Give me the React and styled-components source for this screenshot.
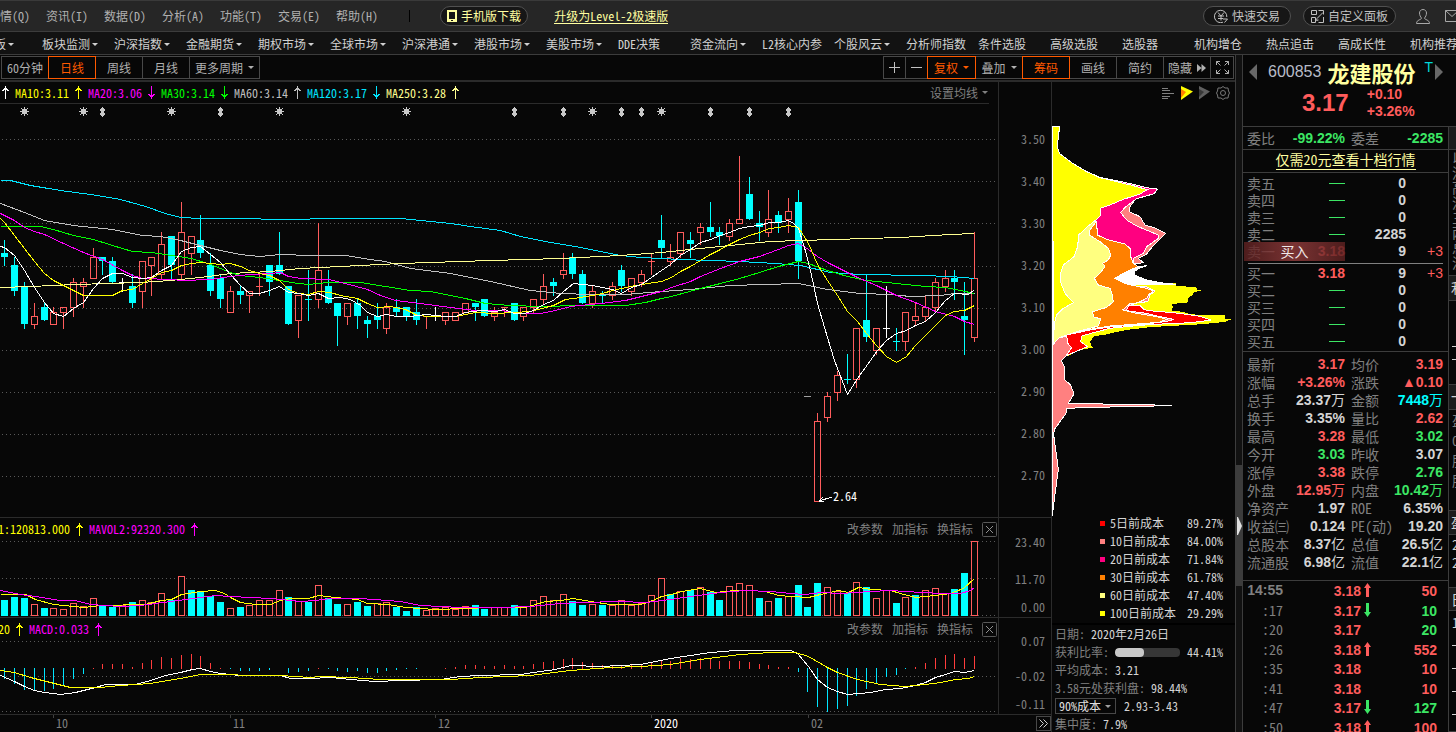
import React, { Component } from 'react';
import styled, { createGlobalStyle, ThemeProvider } from 'styled-components';

const theme = {
  colors: {
    bg: '#070707',
    line: '#2b2b2b',
    border: '#484848',
    panelLine: '#3c3c3c',
    text: '#c8c8c8',
    muted: '#808080',
    accent: '#ff5a00',
    up: '#ff5c5c',
    down: '#3ce664',
    cyan: '#00ffff',
    white: '#d4d4d4',
    paleYellow: '#ffffa0',
  },
};

const GlobalStyle = createGlobalStyle`
  * { box-sizing: border-box; }
  body {
    margin: 0;
    background: #070707;
    color: #c8c8c8;
    font-family: "Noto Sans CJK SC", sans-serif;
    font-feature-settings: "hwid";
    font-size: 12px;
    line-height: 18px;
    overflow: hidden;
  }
  button, select {
    font: inherit;
    font-feature-settings: inherit;
    color: inherit;
    background: none;
    border: 0;
    padding: 0;
    margin: 0;
    white-space: nowrap;
  }
  a { color: inherit; text-decoration: none; }
  svg { display: block; flex: none; }
  ul, dl, dd { margin: 0; padding: 0; list-style: none; }
`;

/* ---------- top bar ---------- */

const TopBar = styled.header`
  display: flex;
  align-items: center;
  height: 32px;
  background: #262626;
  border-top: 1px solid #3a3a3a;
  border-bottom: 1px solid #3c3c3c;
  overflow: hidden;
  white-space: nowrap;
`;

const Menu = styled.nav`
  display: flex;
  gap: 16px;
  margin-left: -12px;
  color: #b0b0b0;
`;

const Divider = styled.span`
  width: 1px;
  height: 12px;
  margin: 0 30px 0 31px;
  background: #000;
`;

const Pill = styled.button`
  display: flex;
  align-items: center;
  gap: 4px;
  height: 20px;
  padding: 0 ${({ pad }) => pad}px;
  border: 1px solid #505050;
  border-radius: 10px;
  background: #161616;
  color: ${({ tone }) => tone || '#c0c0c0'};
`;

const UpgradeLink = styled.a`
  margin-left: 26px;
  color: ${({ theme }) => theme.colors.paleYellow};
  border-bottom: 1px solid;
  line-height: 14px;
`;

const TopRight = styled.div`
  display: flex;
  align-items: center;
  gap: 12px;
  margin: 0 -3px 0 auto;
`;

const TopIcons = styled.div`
  display: flex;
  align-items: center;
  gap: 15px;
  padding-left: 8px;
`;

/* ---------- shortcuts ---------- */

const Shortcuts = styled.nav`
  display: flex;
  height: 23px;
  padding-top: 2px;
  margin-left: -30px;
  background: #121212;
  border-bottom: 1px solid ${({ theme }) => theme.colors.panelLine};
  color: #d0d0d0;
  overflow: hidden;
`;

const Shortcut = styled.a`
  display: flex;
  flex: 0 0 72px;
  align-items: center;
  gap: 2px;
  white-space: nowrap;
`;

const Caret = styled.span`
  border: 3px solid transparent;
  border-top-color: currentColor;
  border-bottom: 0;
`;

/* ---------- page frame ---------- */

const Body = styled.div`
  display: grid;
  grid-template-columns: minmax(0, 1fr) 6px 214px;
`;

const Main = styled.main`
  min-width: 0;
  border-right: 1px solid ${({ theme }) => theme.colors.panelLine};
`;

const Toolbar = styled.div`
  display: flex;
  justify-content: space-between;
  height: 27px;
  padding: 1px 1px 0;
  border-bottom: 2px solid ${({ theme }) => theme.colors.line};
`;

const Tabs = styled.div`
  display: flex;
`;

const Tab = styled.button`
  position: relative;
  display: flex;
  align-items: center;
  justify-content: center;
  gap: 5px;
  width: ${({ width }) => width || 48}px;
  height: 23px;
  border: 1px solid ${({ theme, active }) => (active ? theme.colors.accent : theme.colors.border)};
  color: ${({ theme, active }) => (active ? theme.colors.accent : '#b0b0b0')};
  z-index: ${({ active }) => (active ? 1 : 0)};
  & + & { margin-left: -1px; }
`;

const Workspace = styled.div`
  display: grid;
  grid-template-columns: minmax(0, 1fr) 184px;
`;

const Section = styled.section`
  display: grid;
  grid-template-columns: minmax(0, 1fr) 53px;
  border-bottom: 1px solid ${({ theme }) => theme.colors.line};
`;

const Plot = styled.div`
  flex: 1;
  min-width: 0;
  overflow: hidden;
`;

const PlotSvg = styled.svg`
  width: 100%;
  height: ${({ size }) => size}px;
`;

const PlotHeader = styled.div`
  display: flex;
  align-items: center;
  justify-content: space-between;
  height: 22px;
  padding-right: 1px;
  white-space: nowrap;
`;

const MaHeader = styled(PlotHeader)`
  margin-right: 9px;
  border-bottom: 1px solid ${({ theme }) => theme.colors.line};
`;

const Readings = styled.div`
  display: flex;
  gap: 6px;
`;

const Reading = styled.span`
  display: flex;
  align-items: center;
  justify-content: flex-end;
  gap: 6px;
  color: ${({ color }) => color};
  width: ${({ clip }) => (clip ? `${clip}px` : 'auto')};
`;

const HeaderTools = styled.div`
  display: flex;
  align-items: center;
  gap: 9px;
  color: ${({ theme }) => theme.colors.muted};
`;

const AverageButton = styled.button`
  display: flex;
  align-items: center;
  gap: 4px;
  color: ${({ theme }) => theme.colors.muted};
`;

const PriceAxis = styled.div`
  border-left: 1px solid ${({ theme }) => theme.colors.line};
  color: ${({ theme }) => theme.colors.muted};
  padding: 36px 6px 0 0;
  line-height: 42px;
  text-align: right;
`;

const SmallAxis = styled.div`
  display: grid;
  grid-template-rows: ${({ step }) => `${step}px ${step}px`} 1fr;
  align-items: center;
  border-left: 1px solid ${({ theme }) => theme.colors.line};
  color: ${({ theme }) => theme.colors.muted};
  padding: 5px 6px 0 0;
  text-align: right;
`;

const DateRow = styled.div`
  display: flex;
  height: 17px;
`;

const MoreButton = styled.button`
  display: grid;
  place-items: center;
  flex: none;
  width: 15px;
  height: 15px;
  margin-top: 1px;
  border: 1px solid ${({ theme }) => theme.colors.border};
`;

/* ---------- chip distribution ---------- */

const Chips = styled.aside`
  border-left: 1px solid ${({ theme }) => theme.colors.line};
  overflow: hidden;
`;

const ChipTools = styled.div`
  display: flex;
  align-items: center;
  justify-content: flex-end;
  gap: 6px;
  height: 22px;
  padding-right: 5px;
`;

const ChipSvg = styled.svg`
  width: 182px;
  height: 410px;
  overflow: visible;
`;

const CostList = styled.ul`
  padding: 0 12px 1px 48px;
  border-bottom: 2px solid #000;
`;

const CostItem = styled.li`
  display: flex;
  align-items: center;
  gap: 5px;
  color: ${({ theme }) => theme.colors.white};
`;

const Swatch = styled.span`
  width: 5px;
  height: 5px;
  background: ${({ color }) => color};
`;

const CostValue = styled.span`
  margin-left: auto;
`;

const Info = styled.dl`
  padding: 0 12px 0 3px;
`;

const InfoRow = styled.div`
  display: flex;
  align-items: center;
  height: 18px;
  white-space: nowrap;
  dt { color: ${({ theme }) => theme.colors.muted}; }
  dd {
    margin-left: 6px;
    color: ${({ theme }) => theme.colors.white};
  }
`;

const RatioValue = styled.dd`
  display: flex;
  align-items: center;
  gap: 7px;
`;

const Track = styled.span`
  width: 65px;
  height: 9px;
  border-radius: 4px;
  background: #363636;
  overflow: hidden;
`;

const Fill = styled.span`
  display: block;
  height: 100%;
  border-radius: 4px;
  background: #c8c8c8;
`;

const SelectBox = styled.label`
  display: flex;
  align-items: center;
  width: 61px;
  height: 16px;
  padding: 0 4px 0 3px;
  margin-right: 2px;
  border: 1px solid ${({ theme }) => theme.colors.border};
  color: #a0a0a0;
  select {
    appearance: none;
    width: 48px;
    line-height: 14px;
    color: #e0e0e0;
  }
`;

const ScrollTrack = styled.div`
  display: flex;
  flex-direction: column;
  padding-top: 410px;
  background: #111;
`;

const ScrollThumb = styled.div`
  display: flex;
  align-items: center;
  justify-content: flex-end;
  height: 121px;
  background: #3c3c3c;
`;

/* ---------- quote panel ---------- */

const Quote = styled.aside`
  border-left: 1px solid ${({ theme }) => theme.colors.panelLine};
  font-size: 14px;
  min-width: 0;
  overflow: hidden;
`;

const QuoteHead = styled.div`
  height: 72px;
  padding-top: 4px;
  border-bottom: 1px solid ${({ theme }) => theme.colors.panelLine};
`;

const StockTitle = styled.div`
  display: flex;
  align-items: center;
  height: 26px;
  padding-left: 6px;
  white-space: nowrap;
`;

const StockCode = styled.span`
  margin: 0 6px 0 11px;
  font: 16px "Liberation Sans", sans-serif;
  color: #b8bcc8;
`;

const StockName = styled.h1`
  margin: 0;
  font-size: 22px;
  font-weight: 700;
  line-height: 26px;
  color: ${({ theme }) => theme.colors.paleYellow};
`;

const Tag = styled.span`
  align-self: flex-start;
  margin: 0 2px 0 9px;
  font: 14px/16px "Liberation Sans", sans-serif;
  color: #00d8d8;
`;

const PriceLine = styled.div`
  display: flex;
  align-items: center;
  gap: 18px;
  padding-left: 59px;
  height: 36px;
  color: ${({ theme }) => theme.colors.up};
  font-family: "Liberation Sans", sans-serif;
  font-weight: 700;
`;

const LastPrice = styled.span`
  font-size: 24px;
`;

const Changes = styled.div`
  line-height: 17px;
`;

const QuoteBody = styled.div`
  display: grid;
  grid-template-columns: minmax(0, 1fr) 8px;
`;

const Num = styled.span`
  font-family: "Liberation Sans", "Noto Sans CJK SC", sans-serif;
  font-weight: 700;
  text-align: right;
  white-space: nowrap;
  color: ${({ theme, tone }) => theme.colors[tone || 'white']};
`;

const Unit = styled.span`
  font-weight: 400;
`;

const Label = styled.span`
  color: ${({ theme }) => theme.colors.muted};
  white-space: nowrap;
`;

const PairRow = styled.div`
  display: grid;
  grid-template-columns: 28px 70px 28px 70px;
  align-items: center;
  height: 18px;
  padding-left: 4px;
  ${Label}:nth-child(3) { margin-left: 6px; }
`;

const RatioRow = styled(PairRow)`
  height: 23px;
  border-bottom: 1px solid ${({ theme }) => theme.colors.panelLine};
`;

const PromoRow = styled.div`
  height: 23px;
  text-align: center;
  border-bottom: 1px solid ${({ theme }) => theme.colors.panelLine};
  a {
    color: ${({ theme }) => theme.colors.paleYellow};
    border-bottom: 1px solid;
  }
`;

const Depth = styled.div`
  padding: ${({ side }) => (side === 'sell' ? '1px 5px 4px 4px' : '0 5px 2px 4px')};
`;

const DepthRow = styled.div`
  position: relative;
  display: grid;
  grid-template-columns: 40px 58px 61px 37px;
  align-items: center;
  height: 17px;
`;

const Dash = styled.span`
  justify-self: end;
  width: 16px;
  height: 1px;
  background: ${({ theme }) => theme.colors.down};
`;

const Delta = styled(Num)`
  font-weight: 400;
`;

const BuyButton = styled.button`
  position: absolute;
  left: -3px;
  top: 0;
  width: 101px;
  height: 19px;
  line-height: 19px;
  color: #f0e8e8;
  background: linear-gradient(90deg, rgba(90, 32, 32, 0.85), rgba(150, 62, 62, 0.8) 50%, rgba(90, 32, 32, 0.85));
`;

const DepthSplit = styled.div`
  height: 1px;
  margin: 0 5px;
  background: #808080;
`;

const Stats = styled.div`
  height: 230px;
  padding-top: 3px;
  border-top: 1px solid ${({ theme }) => theme.colors.panelLine};
  border-bottom: 1px solid ${({ theme }) => theme.colors.panelLine};
`;

const Ticks = styled.table`
  width: 100%;
  border-collapse: collapse;
  line-height: 18px;
  td {
    padding: 0;
    vertical-align: top;
  }
  tr { height: 20px; }
  tr:nth-child(even) { height: 19px; }
`;

const TimeCell = styled.td`
  width: 40px;
  text-align: right;
  color: ${({ theme }) => theme.colors.muted};
  font-weight: ${({ strong }) => (strong ? 700 : 400)};
  font-family: ${({ strong }) => (strong ? '"Liberation Sans", sans-serif' : 'inherit')};
`;

const TickPrice = styled.td`
  width: 78px;
  text-align: right;
`;

const TickArrow = styled.td`
  padding: 2px 0 0 3px !important;
`;

const TickVolume = styled.td`
  padding-right: 11px !important;
  text-align: right;
`;

const Strip = styled.div`
  border-left: 1px solid ${({ theme }) => theme.colors.panelLine};
  color: ${({ theme }) => theme.colors.muted};
  overflow: hidden;
`;

const StripHead = styled.div`
  height: ${({ size }) => size || 25}px;
  padding-left: 2px;
  background: #1c1c1c;
  border-bottom: 1px solid ${({ theme }) => theme.colors.panelLine};
  line-height: 22px;
  white-space: nowrap;
  color: ${({ theme }) => theme.colors.white};
`;

const StripBody = styled.div`
  height: ${({ size }) => size}px;
  padding-left: 3px;
  border-bottom: 1px solid ${({ theme }) => theme.colors.panelLine};
  line-height: ${({ line }) => line}px;
  color: ${({ theme, bright }) => (bright ? theme.colors.white : 'inherit')};
`;

const StripRow = styled.div`
  display: flex;
  align-items: center;
  height: ${({ size }) => size}px;
  white-space: nowrap;
`;

const StripDash = styled.span`
  width: 14px;
  height: 1px;
  background: currentColor;
`;

/* ---------- data ---------- */

const MENU = ['行情(Q)', '资讯(I)', '数据(D)', '分析(A)', '功能(T)', '交易(E)', '帮助(H)'];

const SHORTCUTS = [
  ['创业板', true], ['板块监测', true], ['沪深指数', true], ['金融期货', true],
  ['期权市场', true], ['全球市场', true], ['沪深港通', true], ['港股市场', true],
  ['美股市场', true], ['DDE决策'], ['资金流向', true], ['L2核心内参'],
  ['个股风云', true], ['分析师指数'], ['条件选股'], ['高级选股'], ['选股器'],
  ['机构增仓'], ['热点追击'], ['高成长性'], ['机构推荐'],
];

// direction, high, body top, body bottom, low (cents)
const CANDLES = [
  'C 326 323 322 320', 'C 322 320 314 313', 'C 316 315 306 305', 'R 311 308 306 305', 'C 311 310 307 307',
  'R 310 309 306 306', 'R 310 310 309 305', 'R 317 316 310 308', 'R 317 316 315 310', 'R 324 322 317 317',
  'C 322 322 321 318', 'C 322 321 316 316', 'W 317 316 316 314', 'C 318 315 311 310', 'R 321 321 314 310',
  'R 322 322 320 313', 'R 328 325 318 317', 'C 327 327 320 317', 'R 335 328 318 317', 'R 327 327 323 318',
  'C 332 326 323 322', 'C 323 320 314 313', 'C 318 317 312 310', 'R 315 314 309 309', 'C 315 314 313 311',
  'R 314 314 313 309', 'R 318 315 315 313', 'C 320 320 316 313', 'C 328 320 318 318', 'C 315 315 306 306',
  'R 313 313 307 303', 'C 319 312 312 307', 'R 330 319 312 310', 'C 319 315 311 311', 'C 311 311 308 301',
  'R 311 311 308 306', 'C 312 311 308 305', 'C 308 307 306 303', 'C 311 308 307 305', 'R 311 310 305 304',
  'C 312 310 309 308', 'C 310 310 308 307', 'C 312 309 307 306', 'R 308 308 308 305', 'W 310 308 308 307',
  'R 309 309 307 306', 'R 309 309 307 307', 'R 311 311 309 309', 'C 311 311 310 307', 'C 312 312 308 308',
  'R 310 309 308 307', 'R 310 310 310 308', 'C 311 311 307 307', 'R 310 310 308 307', 'R 312 312 310 309',
  'R 318 315 312 311', 'C 317 316 315 313', 'R 323 319 318 317', 'C 323 322 318 317', 'C 319 318 311 311',
  'R 315 314 311 310', 'C 314 313 313 311', 'R 316 315 313 312', 'C 320 319 315 314', 'R 317 317 314 313',
  'R 319 318 316 315', 'R 323 321 321 318', 'C 332 326 324 322', 'R 325 322 321 320', 'R 328 328 323 322',
  'C 328 326 325 322', 'R 330 329 328 325', 'C 335 329 328 327', 'C 329 328 327 325', 'R 331 330 327 326',
  'R 346 331 330 330', 'C 341 337 331 331', 'C 333 330 329 326', 'R 338 331 328 327', 'C 333 332 330 328',
  'R 336 333 331 328', 'C 338 335 321 317', 'G 289 289 289 289', 'R 285 283 264 264', 'R 290 289 284 283',
  'R 295 294 290 288', 'C 299 293 293 292', 'R 305 305 293 291', 'C 318 307 303 302', 'R 305 305 300 299',
  'W 315 305 305 303', 'C 305 302 302 300', 'R 309 309 302 300', 'R 311 308 307 306', 'R 313 310 308 307',
  'R 317 316 310 309', 'R 319 317 315 314', 'C 319 317 316 312', 'C 316 308 307 299', 'R 328 317 303 302',
].map((row) => row.split(' '));

const VOLUMES = [
  16, 19, 18, 11, 8, 7, 6, 12, 9, 17, 10, 9, 10, 14, 15, 13, 22, 16, 39, 26,
  25, 20, 14, 7, 9, 10, 15, 15, 25, 19, 14, 14, 30, 18, 12, 11, 14, 10, 12, 13,
  9, 5, 9, 5, 7, 8, 6, 9, 11, 7, 8, 8, 11, 8, 15, 19, 15, 21, 15, 11,
  11, 11, 10, 15, 10, 12, 20, 37, 22, 24, 26, 28, 24, 16, 29, 32, 30, 18, 14, 18,
  19, 31, 9, 33, 28, 24, 23, 33, 29, 17, 25, 13, 18, 21, 25, 27, 22, 27, 43, 74,
];

const FALLING = new Set([
  0, 1, 2, 4, 10, 11, 13, 17, 19, 20, 21, 22, 24, 29, 31, 33, 34, 36, 37, 40, 41, 42, 48, 49,
  52, 58, 59, 61, 68, 70, 72, 73, 77, 79, 81, 82, 83, 86, 88, 91, 93, 97, 98,
]);

const MACD = [
  -11, -16, -22, -23, -23, -21, -18, -11, -6, 1, 5, 5, 5, 2, 6, 9, 12, 11, 14, 15,
  13, 6, 1, -1, -3, -3, -3, -2, 0, -5, -4, -3, 1, -1, -3, -4, -3, -5, -5, -3,
  -2, -1, -1, 0, 0, 1, 2, 4, 4, 3, 3, 4, 3, 3, 5, 7, 8, 10, 11, 7,
  6, 4, 4, 4, 4, 4, 6, 8, 8, 11, 10, 11, 10, 8, 8, 8, 7, 5, 4, 2,
  2, -4, -24, -39, -44, -41, -38, -28, -21, -15, -9, -7, -1, 2, 6, 11, 14, 15, 11, 13,
];

const MA_LINES = [
  ['#c0c0c0', '0,203 24,212 44,220 73,225 112,229 142,235 160,236 180,240 200,245 220,250 240,254 259,256 280,254 310,255 345,255 370,259 385,261 410,268 450,273 490,281 530,290 560,293 590,294 625,294 661,291 690,289 730,285 798,283 808,285 827,289 860,293 890,294 910,296 940,295 954,293 974,293'],
  ['#00e5ff', '0,180 10,180 30,185 60,190 90,194 120,199 145,206 165,213 180,217 200,218 240,218 280,219 340,218 400,218 430,221 450,223 470,226 500,230 520,236 550,242 580,247 605,252 620,255 640,257 680,259 740,261 775,263 800,265 830,272 860,274 920,275 950,276 974,278'],
  ['#ffff90', '0,287 30,286 75,284 140,282 170,280 200,277 230,273 270,271 300,268 340,266 400,263 490,260 560,258 620,255 661,252 680,250 720,246 770,241 800,240 900,237 950,234 974,233'],
  ['#00ff00', '0,226 40,226 53,229 73,235 93,239 112,245 132,251 151,252 171,255 191,258 210,264 230,272 240,275 259,277 279,280 298,283 308,284 328,282 360,282 385,286 410,290 430,291 445,294 465,298 485,303 510,305 540,306 580,305 625,305 645,302 661,298 671,296 700,288 720,283 739,278 759,272 778,266 798,261 808,263 827,270 847,276 866,280 896,283 925,286 945,287 960,290 974,293'],
  ['#ff00ff', '0,213 14,220 24,227 34,231 44,234 63,243 83,252 102,259 122,270 132,275 142,278 171,279 181,280 210,279 230,276 249,274 270,273 280,272 288,276 300,278 328,279 345,283 367,289 380,295 395,300 420,303 450,307 475,310 500,310 514,312 525,313 540,313 555,310 570,306 600,303 625,300 645,295 661,291 671,287 690,281 700,276 720,268 739,261 759,256 778,249 788,245 798,243 808,249 817,256 827,262 847,272 857,277 876,285 896,295 915,302 935,311 954,316 964,321 974,324'],
  ['#ffff00', '0,218 4,222 14,235 24,248 34,261 44,273 53,280 63,285 73,290 83,295 112,295 122,290 132,289 142,283 151,278 161,272 171,270 181,265 191,263 200,262 210,263 220,264 230,263 240,266 249,270 259,273 269,275 279,280 288,289 298,293 308,294 318,291 330,292 340,295 357,298 367,303 377,307 390,306 405,309 417,315 430,316 455,316 475,312 495,313 530,311 545,307 553,305 565,299 580,297 592,295 602,293 612,290 630,286 641,284 661,281 671,277 680,271 690,266 700,260 710,254 720,249 729,244 739,239 749,235 759,232 769,228 778,227 788,225 798,227 808,243 817,264 827,280 837,295 847,311 857,321 866,333 876,345 886,356 896,362 906,356 915,345 925,335 935,325 945,315 954,311 964,310 974,305'],
  ['#ffffff', '0,246 4,247 14,255 24,270 34,287 44,302 53,313 63,316 73,308 83,302 93,288 102,278 112,273 122,273 132,277 142,278 151,277 161,270 171,265 181,251 191,247 200,246 210,254 220,262 230,274 240,285 249,293 259,293 269,290 279,286 288,292 298,293 308,295 318,293 328,298 340,297 350,299 360,305 367,312 377,316 386,314 396,316 410,316 426,314 445,316 455,316 465,312 480,310 495,311 504,309 514,313 524,313 533,310 543,304 553,300 563,291 573,283 582,284 592,285 602,287 612,289 621,293 631,287 641,284 651,277 661,270 670,264 680,255 690,249 700,242 710,239 720,235 729,232 739,228 749,226 759,225 769,222 778,222 788,220 793,223 798,228 804,247 810,270 817,303 827,337 834,360 847,394 857,378 870,360 877,350 886,340 896,333 906,330 915,325 925,321 935,312 945,300 954,293 968,294 974,289'],
];

const VOLUME_LINES = [
  ['#ffff00', '0,594 25,594 35,599 53,604 83,607 100,605 145,604 161,600 171,599 181,594 200,591 215,590 224,593 230,597 240,602 255,604 270,604 280,600 290,598 308,598 318,595 335,597 357,599 367,603 388,604 405,607 435,609 465,608 490,607 525,607 545,601 560,600 573,598 590,601 610,604 640,604 650,601 661,596 671,594 681,591 700,588 715,592 735,590 750,590 765,591 778,595 790,596 808,597 820,594 838,590 848,592 858,587 870,589 890,590 900,593 915,597 935,595 950,593 963,588 974,578'],
  ['#ff00ff', '0,590 20,594 35,596 60,600 75,600 90,604 120,606 140,605 170,601 200,597 215,595 230,596 270,598 300,601 315,600 330,598 360,598 400,601 420,605 460,607 500,607 530,606 560,603 580,602 620,601 645,602 670,599 690,596 720,592 745,590 770,591 790,593 805,594 820,592 840,593 870,591 890,590 905,591 940,593 960,593 970,590 974,587'],
];

const MACD_LINES = [
  ['#ffffff', '0,675 14,681 24,686 34,690 44,692 60,694 75,692 95,687 105,684 135,684 150,680 165,675 180,672 192,669 200,668 210,671 220,673 240,675 280,675 290,678 310,678 330,677 350,679 375,681 400,680 440,679 460,676 480,675 520,674 540,671 555,669 570,665 600,666 640,664 670,658 710,652 735,650 790,650 797,653 808,666 817,679 827,687 837,691 847,694 870,692 885,689 900,688 915,685 925,682 935,677 945,674 954,671 964,672 974,670'],
  ['#ffff00', '0,670 14,672 30,677 50,682 70,687 100,687 120,685 150,683 180,678 200,674 225,674 250,675 280,675 310,677 320,676 350,677 380,679 450,679 480,677 530,675 570,670 610,667 640,666 670,664 700,659 740,654 770,652 795,652 808,656 827,667 837,672 857,679 880,684 905,686 925,684 940,682 955,679 968,678 974,676'],
];

const STARS = [24, 83, 171, 279, 406, 592, 661];
const DIAMONDS = [102, 220, 514, 563, 621, 641, 710, 749, 788];

const COSTS = [
  ['#ff0000', '5日前成本', '89.27%'],
  ['#ff8080', '10日前成本', '84.00%'],
  ['#ff0080', '20日前成本', '71.84%'],
  ['#ff8000', '30日前成本', '61.78%'],
  ['#ffff80', '60日前成本', '47.40%'],
  ['#ffff00', '100日前成本', '29.29%'],
];

const SELLS = [['卖五', '', '0'], ['卖四', '', '0'], ['卖三', '', '0'], ['卖二', '', '2285'], ['卖一', '3.18', '9', '+3']];
const BUYS = [['买一', '3.18', '9', '+3'], ['买二', '', '0'], ['买三', '', '0'], ['买四', '', '0'], ['买五', '', '0']];

const STATS = [
  ['最新', '3.17', 'up', '', '均价', '3.19', 'up'],
  ['涨幅', '+3.26%', 'up', '', '涨跌', '▲0.10', 'up'],
  ['总手', '23.37', 'white', '万', '金额', '7448', 'cyan', '万'],
  ['换手', '3.35%', 'white', '', '量比', '2.62', 'up'],
  ['最高', '3.28', 'up', '', '最低', '3.02', 'down'],
  ['今开', '3.03', 'down', '', '昨收', '3.07', 'white'],
  ['涨停', '3.38', 'up', '', '跌停', '2.76', 'down'],
  ['外盘', '12.95', 'up', '万', '内盘', '10.42', 'down', '万'],
  ['净资产', '1.97', 'white', '', 'ROE', '6.35%', 'white'],
  ['收益㈢', '0.124', 'white', '', 'PE(动)', '19.20', 'white'],
  ['总股本', '8.37', 'white', '亿', '总值', '26.5', 'white', '亿'],
  ['流通股', '6.98', 'white', '亿', '流值', '22.1', 'white', '亿'],
];

const TICKS = [
  ['14:55', '3.18', 'up', '50', 'up'],
  [':17', '3.17', 'down', '10', 'down'],
  [':20', '3.17', '', '20', 'down'],
  [':26', '3.18', 'up', '552', 'up'],
  [':35', '3.18', '', '10', 'up'],
  [':41', '3.18', '', '10', 'up'],
  [':47', '3.17', 'down', '127', 'down'],
  [':50', '3.18', 'up', '100', 'up'],
];

/* ---------- drawing helpers ---------- */

const barX = (i) => Math.floor(4.97 + 9.793 * i);
const priceY = (cents) => Math.round(139 + (350 - cents) * 4.21);
const barColor = { C: '#00ffff', R: '#ff5c5c', W: '#ffffff', G: '#a0a0a0' };

const Grid = ({ rows }) => rows.map((y) => (
  <line key={y} x1="2" x2="100%" y1={y + 0.5} y2={y + 0.5} stroke="#585858" strokeDasharray="1 3" />
));

const Lines = ({ lines }) => lines.map(([color, points]) => (
  <polyline key={color} points={points} fill="none" stroke={color} transform="translate(.5 .5)" />
));

const Candle = ({ index, row }) => {
  const [kind, ...prices] = row;
  const [high, top, bottom, low] = prices.map(priceY);
  const x = barX(index);
  const color = barColor[kind];
  if (top === bottom) {
    return (
      <g fill={color}>
        <rect x={x} y={high} width="1" height={low - high + 1} />
        <rect x={x - 3} y={top} width="7" height="1" />
      </g>
    );
  }
  return (
    <g fill={color}>
      <rect x={x} y={high} width="1" height={top - high} />
      <rect x={x} y={bottom} width="1" height={low - bottom + 1} />
      {kind === 'C'
        ? <rect x={x - 3} y={top} width="7" height={bottom - top} />
        : <rect x={x - 2.5} y={top + 0.5} width="6" height={bottom - top} fill="none" stroke={color} />}
    </g>
  );
};

const Trend = ({ down }) => (
  <svg width="7" height="13" fill="currentColor" shapeRendering="crispEdges">
    <path
      transform={down ? 'matrix(1 0 0 -1 0 13)' : undefined}
      d="M3 0h1v13h-1zM2 2h3v1h-3zM1 3h5v1h-5zM0 4h2v1h-2zM5 4h2v1h-2z" />
  </svg>
);

const CloseBox = () => (
  <svg width="15" height="15" fill="none" stroke="#585858">
    <rect x=".5" y=".5" width="14" height="14" rx="1" />
    <path d="M4 4l7 7M11 4l-7 7" stroke="#909090" />
  </svg>
);

const IndicatorTools = () => (
  <HeaderTools>
    <button>改参数</button>
    <button>加指标</button>
    <button>换指标</button>
    <button aria-label="关闭"><CloseBox /></button>
  </HeaderTools>
);

const PricePlot = () => (
  <PlotSvg size={413} shapeRendering="crispEdges">
    <g transform="translate(0 -104)">
      <Grid rows={[139, 181, 223, 266, 308, 350, 392, 434, 476]} />
      {STARS.map((x) => (
        <g key={x} transform={`translate(${x} 111)`} stroke="#c8c8c8">
          <rect x="-2" y="-2" width="5" height="5" fill="#c8c8c8" stroke="none" />
          <path d="M.5-4V5M-4 .5H5M-3-3l7 7M4-3l-7 7" />
        </g>
      ))}
      {DIAMONDS.map((x) => (
        <path key={x} d={`M${x} 107h1v1h1v1h1v2h-1v2h1v2h-1v1h-1v1h-1v-1h-1v-1h-1v-2h1v-2h-1v-2h1v-1h1z`} fill="#c8c8c8" />
      ))}
      {CANDLES.map((row, i) => <Candle key={i} index={i} row={row} />)}
      <Lines lines={MA_LINES} />
      <path d="M819 501l13-4M819 501l4-4M819 501l5 1" stroke="#fff" />
      <text x="833" y="501" fill="#fff">2.64</text>
    </g>
  </PlotSvg>
);

const VolumePlot = () => (
  <PlotSvg size={77} shapeRendering="crispEdges">
    <g transform="translate(0 -540)">
      <Grid rows={[541, 578, 615]} />
      {VOLUMES.map((size, i) => (FALLING.has(i)
        ? <rect key={i} x={barX(i) - 3} y={616 - size} width="7" height={size} fill="#00ffff" />
        : <rect key={i} x={barX(i) - 2.5} y={615.5 - size} width="6" height={size} fill="#070707" stroke="#ff5c5c" />))}
      <Lines lines={VOLUME_LINES} />
    </g>
  </PlotSvg>
);

const MacdPlot = () => (
  <PlotSvg size={74} shapeRendering="crispEdges">
    <g transform="translate(0 -640)">
      <Grid rows={[641, 676, 711]} />
      {MACD.map((size, i) => (
        <rect
          key={i}
          x={barX(i)}
          y={size > 0 ? 669 - size : 668}
          width="1"
          height={Math.abs(size)}
          fill={size > 0 ? '#ff3c3c' : '#00e5ff'} />
      ))}
      <Lines lines={MACD_LINES} />
    </g>
  </PlotSvg>
);

const DatePlot = () => (
  <PlotSvg size={17}>
    {[[53, '10'], [230, '11'], [435, '12'], [651, '2020'], [808, '02']].map(([x, label]) => (
      <g key={label}>
        <path d={`M${x}.5 0v3`} stroke="#404040" />
        <text x={x + 3} y="13" fill={label === '2020' ? '#ffffff' : '#808080'}>{label}</text>
      </g>
    ))}
  </PlotSvg>
);

const ChipPlot = () => (
  <ChipSvg viewBox="156 -48 546 1230" shapeRendering="crispEdges" stroke="#fff" strokeWidth="3">
    <path fill="#ffff00" stroke="none" d="M158 490H527V498L588 501L592 510L608 512L582 516L577 525L565 533L562 548L515 552L519 560L515 572L545 575L570 582L600 585H675V597L695 598L673 606L600 613L455 621L378 630L350 636L310 645L283 648L270 665L275 680L281 682L240 690L205 708L158 714z" />
    <path fill="#ff0000" d="M158 556H420L432 569L460 573L520 578L560 583L600 589L632 600L600 605L540 610L460 613L400 618L330 625L280 638L245 648L242 665L262 680L215 700L190 712H158z" />
    <path fill="#ffffff" d="M158 440H420L440 437L418 445L402 455L403 465L440 480L480 488L527 493L400 494H158z" />
    <path fill="#ff8080" d="M158 240H405L390 260L388 275L420 290L435 315L468 325L497 340L480 357L457 380L440 402L415 415L430 428L400 432H158z" />
    <path fill="#ff0080" d="M158 19H180L176 40L172 80L178 100L215 128L260 155L300 172L350 182L400 193L440 203L472 207L463 221L410 236L375 262L362 278L380 300L410 318L475 345V355L440 380L430 400L400 415V430H158z" />
    <path fill="#ff8080" d="M158 500H440L466 513L450 525L443 545L415 548L385 558L378 572L440 580L480 590L522 598L500 604L440 612L330 621L280 628L200 645H158z" />
    <path fill="#ff8000" d="M158 305H290L292 345L320 358L375 372L390 385L392 410L400 430L414 440L390 450L343 475L380 492L440 505L460 513L445 525L440 535L415 548L388 552L368 570L400 578L470 590L500 598L480 606L440 610L330 618L280 626L200 643H158z" />
    <path fill="#ffff80" d="M158 300L288 306L270 330L268 345L300 365L325 385L332 405L325 420L308 430L315 440L300 460L283 475L295 495L330 505L337 525L340 545L320 562L278 575L280 590L302 597L295 618L230 635L180 652L165 675H158z" />
    <path fill="#ffff00" d="M158 19H180L176 40L172 80L178 100L215 128L260 155L300 173L350 185L400 197L442 209L420 222L370 238L330 255L300 265L303 285L290 298L262 320L236 345L233 380L222 410L190 435L180 465L183 490L195 520L220 548L190 565L170 585L163 610L160 675z" />
    <path fill="#ff8080" d="M158 675L175 655L200 647L203 670L215 683L200 705L184 722L193 740L195 780L212 795L222 822L205 850L360 853L515 856L435 859L280 862L198 865V880L180 905L163 928L161 945L170 1010L175 1050L168 1100L160 1160L157 1188z" />
    <path d="M157.5 19V1188" />
  </ChipSvg>
);

const StripRows = ({ rows, line }) => rows.map((row, i) => (
  <StripRow key={i} size={line}>{row === '—' ? <StripDash /> : row}</StripRow>
));

class App extends Component {
  renderDepth(rows, highlight) {
    return rows.map(([label, price, volume, delta]) => (
      <DepthRow key={label}>
        <Label>{label}</Label>
        {price ? <Num tone="up">{price}</Num> : <Dash />}
        <Num>{volume}</Num>
        {delta && <Delta tone="up">{delta}</Delta>}
        {highlight === label && <BuyButton>买入</BuyButton>}
      </DepthRow>
    ));
  }

  renderTopBar() {
    return (
      <TopBar>
        <Menu>{MENU.map((item) => <a key={item} href="#menu">{item}</a>)}</Menu>
        <Divider />
        <Pill pad={6} tone="#ffffa0">
          <svg width="10" height="12" fill="currentColor" fillRule="evenodd" shapeRendering="crispEdges">
            <path d="M0 0h10v12H0zM2 2v7h6V2zM4 10v1h2v-1z" />
          </svg>
          手机版下载
        </Pill>
        <UpgradeLink href="#upgrade">升级为Level-2极速版</UpgradeLink>
        <TopRight>
          <Pill pad={10}>
            <svg width="14" height="14" fill="none" stroke="currentColor">
              <path d="M12.800 8A6.200 6.200 0 1 0 9 13.200M4 3.500l3 3.500l3-3.500M4 7h6M4 9.500h5M7 7v4.500M9 10h4.500l-3 3.500" />
            </svg>
            快速交易
          </Pill>
          <Pill pad={7}>
            <svg width="13" height="13" fill="none" stroke="currentColor">
              <path d="M.5.5h5v4h-5zM7.500.5h5v4M.5 7.500h4v5h-4zM12.500 7v5.500h-5M6 8.500l6-6M6 8.500l-.5 2l2-.5" />
            </svg>
            自定义面板
          </Pill>
          <TopIcons>
            <svg width="14" height="15" fill="none" stroke="#a8a8a8">
              <path d="M7 .5c2 0 3.500 1.500 3.500 3.500S9.500 8 8.500 9c0 2 5 1.500 5 5.500H.5c0-4 5-3.500 5-5.500C4.500 8 3.500 6 3.500 4S5 .5 7 .5z" />
            </svg>
            <svg width="14" height="12" fill="none" stroke="#a8a8a8">
              <path d="M.5.5h13v11H.5zM.5.5l6.500 6l6.500-6" />
            </svg>
          </TopIcons>
        </TopRight>
      </TopBar>
    );
  }

  renderToolbar() {
    return (
      <Toolbar>
        <Tabs>
          <Tab>60分钟</Tab>
          <Tab active>日线</Tab>
          <Tab>周线</Tab>
          <Tab>月线</Tab>
          <Tab width={71}>更多周期<Caret /></Tab>
        </Tabs>
        <Tabs>
          <Tab width={23} aria-label="放大">
            <svg width="11" height="11" stroke="#c0c0c0"><path d="M5.500 0v11M0 5.500h11" /></svg>
          </Tab>
          <Tab width={23} aria-label="缩小">
            <svg width="11" height="11" stroke="#c0c0c0"><path d="M0 5.500h11" /></svg>
          </Tab>
          <Tab width={49} active>复权<Caret /></Tab>
          <Tab>叠加<Caret /></Tab>
          <Tab active>筹码</Tab>
          <Tab>画线</Tab>
          <Tab>简约</Tab>
          <Tab>
            隐藏
            <svg width="9" height="8" fill="#b0b0b0"><path d="M0 0l4.500 4l-4.500 4zM4.500 0l4.500 4l-4.500 4z" /></svg>
          </Tab>
          <Tab width={24} aria-label="全屏">
            <svg width="13" height="13" fill="none" stroke="#b0b0b0">
              <path d="M.5 4V.5H4M.5.5l4 4M9 .5h3.500V4M12.500.5l-4 4M.5 9v3.500H4M.5 12.500l4-4M9 12.500h3.500V9M12.500 12.500l-4-4" />
            </svg>
          </Tab>
        </Tabs>
      </Toolbar>
    );
  }

  renderCharts() {
    return (
      <div>
        <Section>
          <Plot>
            <MaHeader>
              <Readings>
                <Reading color="#ffffff" clip={9}><Trend /></Reading>
                <Reading color="#ffff00">MA10:3.11<Trend /></Reading>
                <Reading color="#ff00ff">MA20:3.06<Trend down /></Reading>
                <Reading color="#00ff00">MA30:3.14<Trend down /></Reading>
                <Reading color="#c0c0c0">MA60:3.14<Trend /></Reading>
                <Reading color="#00e5ff">MA120:3.17<Trend down /></Reading>
                <Reading color="#ffff90">MA250:3.28<Trend /></Reading>
              </Readings>
              <AverageButton>设置均线<Caret /></AverageButton>
            </MaHeader>
            <PricePlot />
          </Plot>
          <PriceAxis>
            {['3.50', '3.40', '3.30', '3.20', '3.10', '3.00', '2.90', '2.80', '2.70'].map((p) => (
              <div key={p}>{p}</div>
            ))}
          </PriceAxis>
        </Section>
        <Section>
          <Plot>
            <PlotHeader>
              <Readings>
                <Reading color="#ffff00" clip={83}>1:120813.000<Trend /></Reading>
                <Reading color="#ff00ff">MAVOL2:92320.300<Trend /></Reading>
              </Readings>
              <IndicatorTools />
            </PlotHeader>
            <VolumePlot />
          </Plot>
          <SmallAxis step={37}>
            <span>23.40</span><span>11.70</span><span>0.00</span>
          </SmallAxis>
        </Section>
        <Section>
          <Plot>
            <PlotHeader>
              <Readings>
                <Reading color="#ffff00" clip={23}>20<Trend /></Reading>
                <Reading color="#ff00ff">MACD:0.033<Trend /></Reading>
              </Readings>
              <IndicatorTools />
            </PlotHeader>
            <MacdPlot />
          </Plot>
          <SmallAxis step={35}>
            <span>0.07</span><span>-0.02</span><span>-0.11</span>
          </SmallAxis>
        </Section>
        <DateRow>
          <Plot><DatePlot /></Plot>
          <MoreButton aria-label="更多">
            <svg width="9" height="9" fill="none" stroke="#d0d0d0"><path d="M.5.5l4 4l-4 4M4.500.5l4 4l-4 4" /></svg>
          </MoreButton>
        </DateRow>
      </div>
    );
  }

  renderChips() {
    return (
      <Chips>
        <ChipTools>
          <svg width="13" height="11" stroke="#808080" shapeRendering="crispEdges">
            <path d="M0 .5h6M0 2.500h8M0 5.500h12M0 8.500h8M0 10.500h6" />
          </svg>
          <svg width="12" height="14">
            <path d="M0 0l12 5.500l-12 8.500z" fill="#ffff00" />
            <path d="M0 3l5 3l-5 6z" fill="#ff8000" />
          </svg>
          <svg width="11" height="14">
            <path d="M0 0l11 5.500l-11 8z" fill="#606060" />
            <path d="M0 3l5 3l-5 5z" fill="#383838" />
          </svg>
          <svg width="14" height="14" fill="none" stroke="#787878">
            <path d="M7 .5l2 1.500h3l.5 3l1 2l-1 2l-.5 3h-3l-2 1.500l-2-1.500h-3l-.5-3l-1-2l1-2l.5-3h3z" />
            <circle cx="7" cy="7" r="2.500" />
          </svg>
        </ChipTools>
        <ChipPlot />
        <CostList>
          {COSTS.map(([color, label, value]) => (
            <CostItem key={label}>
              <Swatch color={color} />
              {label}
              <CostValue>{value}</CostValue>
            </CostItem>
          ))}
        </CostList>
        <Info>
          <InfoRow><dt>日期:</dt><dd>2020年2月26日</dd></InfoRow>
          <InfoRow>
            <dt>获利比率:</dt>
            <RatioValue><Track><Fill style={{ width: '44.41%' }} /></Track>44.41%</RatioValue>
          </InfoRow>
          <InfoRow><dt>平均成本:</dt><dd>3.21</dd></InfoRow>
          <InfoRow><dt>3.58元处获利盘:</dt><dd>98.44%</dd></InfoRow>
          <InfoRow>
            <dt>
              <SelectBox>
                <select aria-label="成本区间" defaultValue="90"><option value="90">90%成本</option></select>
                <Caret />
              </SelectBox>
            </dt>
            <dd>2.93-3.43</dd>
          </InfoRow>
          <InfoRow><dt>集中度:</dt><dd>7.9%</dd></InfoRow>
        </Info>
      </Chips>
    );
  }

  renderQuote() {
    return (
      <Quote>
        <QuoteHead>
          <StockTitle>
            <svg width="8" height="16" fill="#686868"><path d="M8 0v16L0 8z" /></svg>
            <StockCode>600853</StockCode>
            <StockName>龙建股份</StockName>
            <Tag>T</Tag>
            <svg width="8" height="16" fill="#686868"><path d="M0 0v16l8-8z" /></svg>
          </StockTitle>
          <PriceLine>
            <LastPrice>3.17</LastPrice>
            <Changes>
              <div>+0.10</div>
              <div>+3.26%</div>
            </Changes>
          </PriceLine>
        </QuoteHead>
        <QuoteBody>
          <div>
            <RatioRow>
              <Label>委比</Label><Num tone="down">-99.22%</Num>
              <Label>委差</Label><Num tone="down">-2285</Num>
            </RatioRow>
            <PromoRow><a href="#level2">仅需20元查看十档行情</a></PromoRow>
            <Depth side="sell">{this.renderDepth(SELLS, '卖一')}</Depth>
            <DepthSplit />
            <Depth side="buy">{this.renderDepth(BUYS)}</Depth>
            <Stats>
              {STATS.map(([label, value, tone, unit, label2, value2, tone2, unit2]) => (
                <PairRow key={label}>
                  <Label>{label}</Label>
                  <Num tone={tone}>{value}<Unit>{unit}</Unit></Num>
                  <Label>{label2}</Label>
                  <Num tone={tone2}>{value2}<Unit>{unit2}</Unit></Num>
                </PairRow>
              ))}
            </Stats>
            <Ticks>
              <tbody>
                {TICKS.map(([time, price, dir, volume, tone]) => (
                  <tr key={time}>
                    <TimeCell strong={time.length > 3}>{time}</TimeCell>
                    <TickPrice><Num tone="up">{price}</Num></TickPrice>
                    <TickArrow>
                      {dir && (
                        <svg width="7" height="14" fill={dir === 'up' ? '#ff5c5c' : '#3ce664'}>
                          <path d={dir === 'up' ? 'M3.500 0L7 5H5v9H2V5H0z' : 'M3.500 14L7 9H5V0H2v9H0z'} />
                        </svg>
                      )}
                    </TickArrow>
                    <TickVolume><Num tone={tone}>{volume}</Num></TickVolume>
                  </tr>
                ))}
              </tbody>
            </Ticks>
          </div>
          <Strip>
            <StripHead size={23} />
            <StripBody size={126} line={15}>
              <StripRows line={15} rows={['以', '流', '高', '流', '三', '两', '总', '流']} />
            </StripBody>
            <StripHead>利</StripHead>
            <StripBody size={84} line={13} bright>
              <StripRows line={13} rows={['', '', '', '—', '—']} />
            </StripBody>
            <StripHead>一</StripHead>
            <StripBody size={101} line={20}>
              <StripRows line={20} rows={['盈', '0', '股', '股']} />
            </StripBody>
            <StripHead size={24}>盈</StripHead>
            <StripBody size={53} line={18} bright>
              <StripRows line={18} rows={['2', '2']} />
            </StripBody>
            <StripHead size={23}>日</StripHead>
            <StripBody size={121} line={23} bright>
              <StripRows line={23} rows={['1', '—', '—', '—', '—']} />
            </StripBody>
          </Strip>
        </QuoteBody>
      </Quote>
    );
  }

  render() {
    return (
      <ThemeProvider theme={theme}>
        <GlobalStyle />
        {this.renderTopBar()}
        <Shortcuts>
          {SHORTCUTS.map(([label, menu]) => (
            <Shortcut key={label} href="#list">{label}{menu && <Caret />}</Shortcut>
          ))}
        </Shortcuts>
        <Body>
          <Main>
            {this.renderToolbar()}
            <Workspace>
              {this.renderCharts()}
              {this.renderChips()}
            </Workspace>
          </Main>
          <ScrollTrack>
            <ScrollThumb>
              <svg width="5" height="18" fill="#e0e0e0"><path d="M0 0h1l4 9l-4 9H0z" /></svg>
            </ScrollThumb>
          </ScrollTrack>
          {this.renderQuote()}
        </Body>
      </ThemeProvider>
    );
  }
}

export default App;
